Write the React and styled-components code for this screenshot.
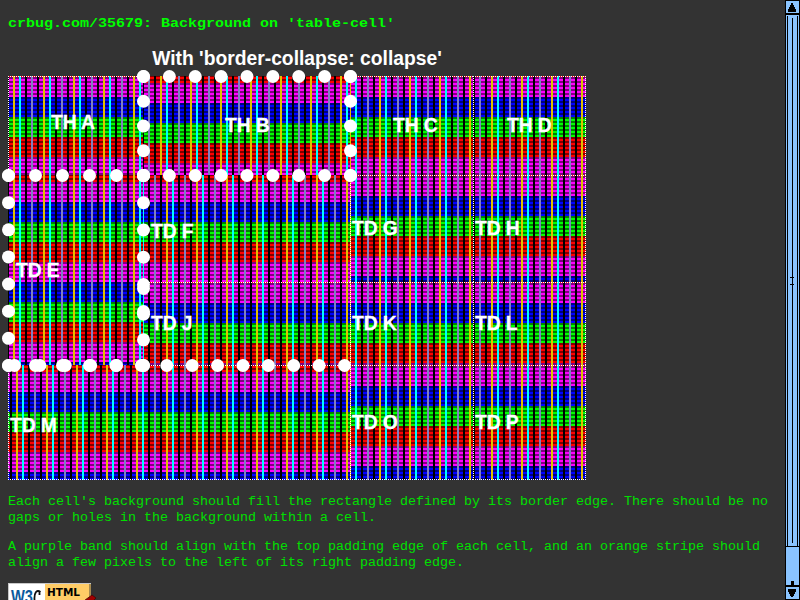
import React from 'react';
import styled, { createGlobalStyle } from 'styled-components';

const Global = createGlobalStyle`
  html, body { margin: 0; height: 600px; overflow: hidden; background: #333; }
`;

const Screen = styled.div`
  display: flex;
  width: 800px;
  height: 600px;
  overflow: hidden;
  background: #333;
`;

const Content = styled.main`
  width: 777px;
  height: 600px;
  padding-left: 8px;
  box-sizing: content-box;
  overflow: hidden;
  color: #0f0;
  font-family: 'Liberation Mono', monospace;
`;

const Title = styled.h1`
  margin: 16px 0 0;
  height: 31px;
  width: 600px;
  font-size: 12px;
  line-height: 17px;
  font-weight: bold;
  white-space: nowrap;
  transform: scaleX(1.25);
  transform-origin: 0 0;
`;

const Caption = styled.div`
  width: 578px;
  height: 29px;
  text-align: center;
  font: bold 19.3px/23px 'Liberation Sans', sans-serif;
  color: #fff;
`;

const Table = styled.div`
  position: relative;
  display: grid;
  grid-template-columns: 135px 207px 123px 113px;
  grid-template-rows: 99px 107px 83px 115px;
  width: 578px;
  height: 404px;
`;

const dotsX = 'repeating-linear-gradient(90deg, #fff 0 1px, transparent 1px 2px)';
const dotsY = 'repeating-linear-gradient(#fff 0 1px, transparent 1px 2px)';
const layers = {
  top: `${dotsX} 0 0 / 100% 1px no-repeat`,
  left: `${dotsY} 0 0 / 1px 100% no-repeat`,
  right: `${dotsY} 100% 0 / 1px 100% no-repeat`,
  bottom: `${dotsX} 0 100% / 100% 1px no-repeat`,
  partTop: `${dotsX} 135px 0 / 207px 1px no-repeat`,
};
const stripes =
  'linear-gradient(90deg, #e0c000 0 2px, transparent 2px 6px, #0ff 6px 8px, transparent 8px 12px, #000 12px 14px, transparent 14px 18px, #8080c0 18px 20px, transparent 20px 24px, #000 24px 26px, transparent 26px)';
const band = (bright, dark, y) =>
  [0, 4, 8, 12, 16]
    .map((o) => `${dark} ${y + o}px ${y + o + 2}px, ${bright} ${y + o + 2}px ${y + o + 4}px`)
    .join(', ');
const bands = `linear-gradient(${band('#f0f', '#800080', 0)}, ${band('#00f', '#000080', 20)}, ${band('#0f0', '#008000', 40)}, ${band('#f00', '#800000', 60)})`;

const Cell = styled.div`
  grid-area: ${(p) => p.$area};
  padding: ${(p) => p.$text[1]}px 0 0 ${(p) => p.$text[0]}px;
  color: #fff;
  font: bold 19.3px/23px 'Liberation Sans', sans-serif;
  -webkit-text-stroke: 0.3px #fff;
  letter-spacing: -0.1px;
  white-space: nowrap;
  background: ${(p) =>
    [
      ...p.$edges.map((e) => layers[e]),
      `${stripes} ${p.$phase[0]}px 0 / 30px 80px`,
      `${bands} 0 ${p.$phase[1]}px / 30px 80px`,
    ].join(', ')};
`;

const Dots = styled.svg`
  position: absolute;
  left: -8px;
  top: -8px;
  pointer-events: none;
`;

const cells = [
  ['TH A', '1 / 1 / 2 / 2', [43, 35], [5, 1], ['top', 'left']],
  ['TH B', '1 / 2 / 2 / 3', [82, 38], [17, 7], []],
  ['TH C', '1 / 3 / 2 / 4', [43, 38], [29, 1], ['top']],
  ['TH D', '1 / 4 / 2 / 5', [34, 38], [18, 1], ['top', 'left', 'right']],
  ['TD E', '2 / 1 / 4 / 2', [8, 84], [5, 7], []],
  ['TD F', '2 / 2 / 3 / 3', [8, 45], [23, 7], []],
  ['TD G', '2 / 3 / 3 / 4', [2, 42], [29, 1], ['top', 'left']],
  ['TD H', '2 / 4 / 3 / 5', [2, 42], [18, 1], ['top', 'left', 'right']],
  ['TD J', '3 / 2 / 4 / 3', [8, 30], [23, 1], ['top']],
  ['TD K', '3 / 3 / 4 / 4', [2, 30], [29, 1], ['top', 'left']],
  ['TD L', '3 / 4 / 4 / 5', [2, 30], [18, 1], ['top', 'left', 'right']],
  ['TD M', '4 / 1 / 5 / 3', [2, 49], [8, 7], ['partTop', 'left', 'bottom']],
  ['TD O', '4 / 3 / 5 / 4', [2, 46], [29, 1], ['top', 'left', 'bottom']],
  ['TD P', '4 / 4 / 5 / 5', [2, 46], [18, 1], ['top', 'left', 'right', 'bottom']],
];

const line = (x1, y1, x2, y2, n) =>
  Array.from({ length: n }, (_, i) => [
    x1 + ((x2 - x1) * i) / (n - 1),
    y1 + ((y2 - y1) * i) / (n - 1),
  ]);
const dots = [
  ...line(143.5, 8.5, 350.5, 8.5, 9),
  ...line(143.5, 107.5, 350.5, 107.5, 9),
  ...line(143.5, 8.5, 143.5, 107.5, 5),
  ...line(350.5, 8.5, 350.5, 107.5, 5),
  ...line(8.5, 107.5, 143.5, 107.5, 6),
  ...line(8.5, 297.5, 143.5, 297.5, 6),
  ...line(8.5, 107.5, 8.5, 297.5, 8),
  ...line(143.5, 107.5, 143.5, 216.5, 5),
  ...line(143.5, 220.5, 143.5, 297.5, 4),
  [143.5, 243.5],
  ...line(14.5, 297.5, 344.5, 297.5, 14),
];

const Note = styled.p`
  margin: ${(p) => p.$gap}px 0 0;
  width: 690px;
  font-size: 12px;
  line-height: 16px;
  white-space: nowrap;
  color: #00e000;
  transform: scaleX(1.111);
  transform-origin: 0 0;
`;

const Badge = styled.svg`
  display: block;
  margin-top: 12px;
`;

const Scrollbar = styled.aside`
  display: flex;
  flex-direction: column;
  width: 15px;
  height: 600px;
  box-sizing: border-box;
  border: solid #000;
  border-width: 0 1px;
  background: #8ac4ff;
`;

const ArrowButton = styled.div`
  height: 15px;
  border-top: ${(p) => (p.$down ? 2 : 1)}px solid #000;
  border-bottom: ${(p) => (p.$down ? 1 : 2)}px solid #000;
  box-sizing: border-box;
  svg { display: block; }
`;

const Thumb = styled.div`
  height: 532px;
  border-bottom: 1px solid #000;
  box-sizing: border-box;
`;

const Track = styled.div`
  flex: 1;
  display: flex;
  justify-content: center;
  align-items: flex-end;
`;

const Nub = styled.i`
  width: 3px;
  height: 4px;
  background: #000;
`;

export default function App() {
  return (
    <Screen>
      <Global />
      <Content>
        <Title>crbug.com/35679: Background on 'table-cell'</Title>
        <Caption>With 'border-collapse: collapse'</Caption>
        <Table>
          {cells.map(([name, area, text, phase, edges]) => (
            <Cell key={name} $area={area} $text={text} $phase={phase} $edges={edges}>
              {name}
            </Cell>
          ))}
          <Dots width="366" height="312" viewBox="0 0 366 312">
            {dots.map(([x, y], i) => (
              <circle key={i} cx={x} cy={y} r="6.5" fill="#fff" />
            ))}
          </Dots>
        </Table>
        <Note $gap={14}>
          Each cell's background should fill the rectangle defined by its border edge. There should be no
          <br />
          gaps or holes in the background within a cell.
        </Note>
        <Note $gap={13}>
          A purple band should align with the top padding edge of each cell, and an orange stripe should
          <br />
          align a few pixels to the left of its right padding edge.
        </Note>
        <Badge width="88" height="31" viewBox="0 0 88 31">
          <path d="M0 0h83v31H0z" fill="#c8c8c8" />
          <path d="M1 1h36v30H1z" fill="#fff" />
          <path d="M37 1h44v30H37z" fill="#fc6" />
          <path d="M81 1h2v30h-2z" fill="#a58a50" />
          <text x="3" y="20" fontFamily="Liberation Sans" fontWeight="bold" fontSize="18" fill="#0b5a9c" textLength="22" lengthAdjust="spacingAndGlyphs">W3</text>
          <path d="M32.5 9c-4-3-6.5 1-6 8M31.5 8v4" fill="none" stroke="#111" strokeWidth="1.8" />
          <text x="39" y="13" fontFamily="DejaVu Sans" fontWeight="bold" fontSize="9.6" textLength="33" lengthAdjust="spacingAndGlyphs">HTML</text>
          <path d="M77 17l7-5 4 3-8 8z" fill="#a00000" stroke="#400" strokeWidth=".7" />
        </Badge>
      </Content>
      <Scrollbar>
        <ArrowButton>
          <svg width="13" height="12" shapeRendering="crispEdges">
            <path d="M6 2h1v2h1v2h1v2h1v3H2V8h1V6h1V4h1V2z" />
          </svg>
        </ArrowButton>
        <Thumb>
          <svg width="13" height="531" shapeRendering="crispEdges">
            <path d="M1 1h1v530H1zM11 1h1v530h-1zM6 3h1v525H6zM4 262h4v1H4zM4 269h4v1H4z" />
          </svg>
        </Thumb>
        <Track><Nub /></Track>
        <ArrowButton $down>
          <svg width="13" height="12" shapeRendering="crispEdges">
            <path d="M2 2h8v3H9v2H8v2H7v1H5V9H4V7H3V5H2z" />
          </svg>
        </ArrowButton>
      </Scrollbar>
    </Screen>
  );
}
